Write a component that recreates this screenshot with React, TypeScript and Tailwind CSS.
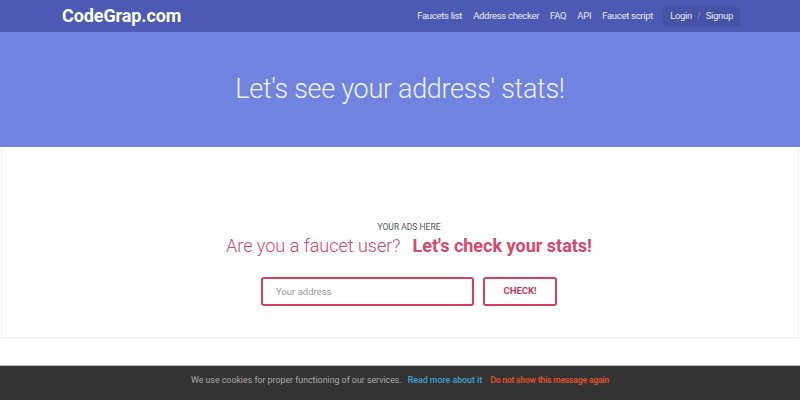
import React from "react";

const navLinks = ["Faucets list", "Address checker", "FAQ", "API", "Faucet script"];

export default function App() {
  return (
    <div className="min-h-[400px] bg-white font-['Roboto','Liberation_Sans',sans-serif] flex flex-col">
      <nav className="h-[32px] bg-[#4c5ab3] flex items-center px-[62px]">
        <a className="text-white font-bold text-[18px] tracking-[-0.1px] leading-none">CodeGrap.com</a>
        <div className="ml-auto flex items-center gap-[11px] text-[9.5px] tracking-[-0.3px] text-[#e6e9f7] mr-[-2px]">
          {navLinks.map((l) => (
            <span key={l}>{l}</span>
          ))}
          <div className="bg-[#4552a5] rounded-[3px] h-[19px] px-[7px] flex items-center gap-[5px] ml-[-1px]">
            <span>Login</span>
            <span className="text-[#8a93c9]">/</span>
            <span>Signup</span>
          </div>
        </div>
      </nav>

      <header className="h-[115px] bg-[#7083de] flex items-center justify-center">
        <h1 className="text-[27px] font-light text-[#eef0fb] tracking-[-0.3px]">
          Let's see your address' stats!
        </h1>
      </header>

      <main className="mx-[1px] h-[191px] border-x border-b border-[#f0f0f0] shadow-[0_1px_2px_rgba(0,0,0,0.04)] flex flex-col items-center pt-[76px] pl-[18px]">
        <div className="text-[8.5px] text-[#555] leading-none">YOUR ADS HERE</div>
        <div className="text-[18px] text-[#d9476a] leading-none mt-[5px]">
          <span className="font-light">Are you a faucet user?</span>
          <span className="font-bold ml-[12px]">Let's check your stats!</span>
        </div>
        <div className="flex gap-[9px] mt-[22px]">
          <input
            placeholder="Your address"
            className="w-[213px] h-[29px] border-2 border-[#d0405f] rounded-[3px] px-[13px] text-[9.5px] outline-none placeholder:text-[#999]"
          />
          <button className="w-[74px] h-[29px] border-2 border-[#d0405f] rounded-[3px] text-[9.5px] font-bold text-[#c93a58]">
            CHECK!
          </button>
        </div>
      </main>

      <div className="mt-auto h-[35px] bg-[#333333] border-t border-[#bbb] flex items-center justify-center gap-[6px] text-[8.8px] pb-[4px]">
        <span className="text-[#aaaaaa]">We use cookies for proper functioning of our services.</span>
        <span className="text-[#3fa4d0] font-medium">Read more about it</span>
        <span className="text-[#d94d2e] font-bold tracking-[-0.3px] ml-[2px]">Do not show this message again</span>
      </div>
    </div>
  );
}
